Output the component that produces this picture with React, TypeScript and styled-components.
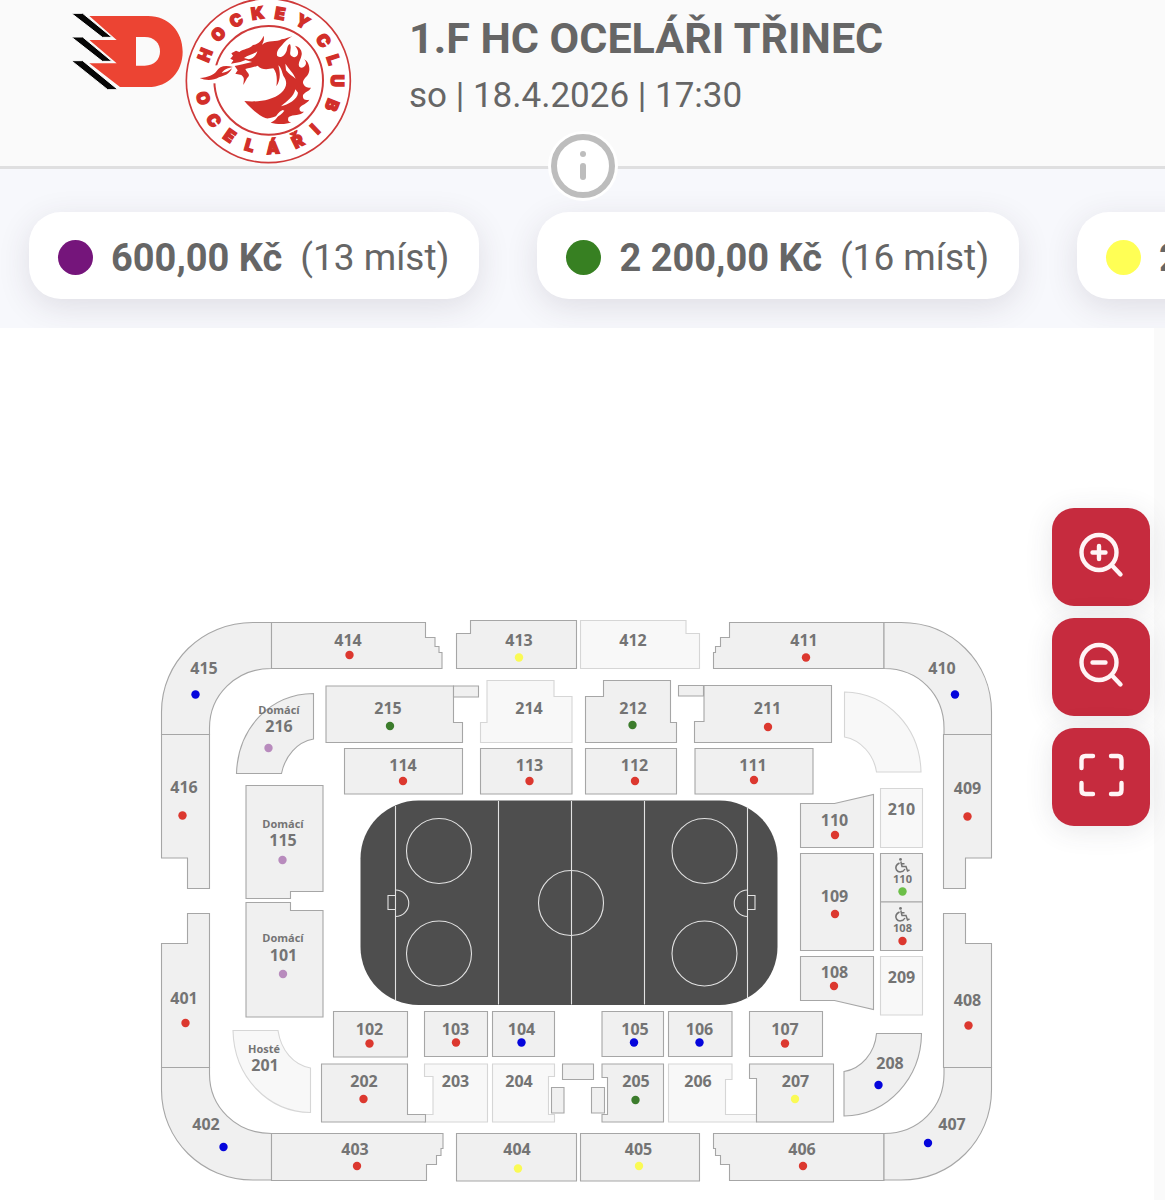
import React from "react";
import styled, { createGlobalStyle } from "styled-components";

const GlobalStyle = createGlobalStyle`
  * { box-sizing: border-box; }
  body {
    margin: 0;
    background: #ffffff;
    color: #666666;
    font-family: Roboto, "Liberation Sans", sans-serif;
    overflow-x: hidden;
  }
`;

const Page = styled.div`
  display: flex;
  flex-direction: column;
  min-height: 100vh;
`;

const Header = styled.header`
  position: relative;
  display: flex;
  height: 169px;
  padding-left: 72px;
  background: #fafafa;
  border-bottom: 3px solid #dfdfe0;
`;

const Logos = styled.div`
  flex: none;
  width: 337px;
`;

const Heading = styled.div`
  display: flex;
  flex-direction: column;
  gap: 8px;
  padding-top: 12px;
`;

const Title = styled.h1`
  margin: 0;
  font-size: 43px;
  line-height: 52px;
  font-weight: 700;
  white-space: nowrap;
`;

const DateLine = styled.p`
  margin: 0;
  font-size: 35px;
  line-height: 48px;
  white-space: nowrap;
`;

const InfoButton = styled.button`
  position: absolute;
  left: 50%;
  bottom: -35px;
  z-index: 1;
  display: grid;
  place-items: center;
  width: 70px;
  height: 70px;
  margin-left: -35px;
  padding: 0;
  border: 0;
  border-radius: 50%;
  background: #ffffff;
`;

const PriceBar = styled.ul`
  display: flex;
  gap: 58px;
  height: 159px;
  margin: 0;
  padding: 43px 0 0 29px;
  list-style: none;
  overflow: hidden;
  background: #f7f8fc;
`;

const PriceItem = styled.li`
  flex: none;
`;

const PriceButton = styled.button`
  display: flex;
  align-items: center;
  gap: 18px;
  height: 87px;
  padding: 4px 30px 0 29px;
  border: 0;
  border-radius: 32px;
  background: #ffffff;
  box-shadow: 0 8px 32px rgba(60, 50, 70, 0.13);
  color: inherit;
  font-family: inherit;
  font-size: 37px;
  line-height: 48px;
  white-space: nowrap;
`;

const Amount = styled.strong`
  font-size: 38px;
`;

const Swatch = styled.span<{ $color: string }>`
  width: 35px;
  height: 35px;
  border-radius: 50%;
  background: ${(p) => p.$color};
`;

const Stage = styled.main`
  position: relative;
  flex: 1;
  margin-right: 11px;
  box-shadow: 11px 0 0 #fafafa;
`;

const Plan = styled.svg`
  display: block;
  width: 100%;
  height: auto;
`;

const Tools = styled.div`
  position: absolute;
  top: 180px;
  right: 4px;
  display: flex;
  flex-direction: column;
  gap: 12px;
`;

const ToolButton = styled.button`
  display: grid;
  place-items: center;
  width: 98px;
  height: 98px;
  padding: 0;
  border: 0;
  border-radius: 22px;
  background: #c62b3e;
  box-shadow: 0 4px 28px rgba(60, 60, 70, 0.12);
`;

const Area = styled.path<{ $off?: boolean }>`
  fill: ${(p) => (p.$off ? "#f8f8f8" : "#f0f0f0")};
  stroke: ${(p) => (p.$off ? "#d6d6d6" : "#a6a6a6")};
  stroke-width: 1.1;
`;

const Label = styled.text<{ $small?: boolean }>`
  fill: #747474;
  font-family: "Open Sans", "Noto Sans", sans-serif;
  font-size: ${(p) => (p.$small ? 11 : 16)}px;
  font-weight: 700;
  text-anchor: middle;
`;

const CrestLetter = styled.text`
  fill: #d22f2a;
  stroke: #d22f2a;
  stroke-width: 4;
  font-family: Inter, "Open Sans", sans-serif;
  font-size: 50px;
  font-weight: 900;
  text-anchor: middle;
`;

const RED = "#dc382f";
const BLUE = "#0505dc";
const GREEN = "#3c7c2c";
const YELLOW = "#fafa55";
const LILAC = "#b88bbd";
const LIME = "#6cbf48";

type Section = {
  id: string;
  d: string;
  x?: number;
  y?: number;
  dot?: [number, number, string];
  off?: boolean;
  note?: [string, number, number];
  chair?: boolean;
};

const rect = (x1: number, y1: number, x2: number, y2: number) =>
  `M${x1} ${y1}H${x2}V${y2}H${x1}Z`;

const sections: Section[] = [
  { id: "415", x: 204, y: 674, dot: [195.5, 694.5, BLUE], d: "M161.5 734.5V712C161.5 662 202 622.5 253 622.5H271.5V668.5C236 668.5 209.5 695 209.5 728V734.5Z" },
  { id: "414", x: 348, y: 646, dot: [349.5, 655, RED], d: "M271.5 622.5H425.5V637.5H435V646.5H439V652.5H442V668.5H271.5Z" },
  { id: "416", x: 184, y: 793, dot: [182.5, 815.5, RED], d: "M161.5 734.5H209.5V888.5H187.5V858H161.5Z" },
  { id: "413", x: 519, y: 646, dot: [519, 657.5, YELLOW], d: "M456.5 668.5V633.5H470.5V620.5H576.5V668.5Z" },
  { id: "412", x: 633, y: 646, off: true, d: "M580.5 668.5V620.5H686V633.5H699.5V668.5Z" },
  { id: "411", x: 804, y: 646, dot: [806, 657.5, RED], d: "M713.5 668.5V652.5H715.5V646.5H720.5V637.5H729.5V622.5H884V668.5Z" },
  { id: "410", x: 942, y: 674, dot: [955, 694.5, BLUE], d: "M884 622.5H901C952 622.5 991.5 662 991.5 712V734.5H944V728C944 695 919 668.5 884 668.5Z" },
  { id: "409", x: 967.5, y: 794, dot: [967.5, 816.5, RED], d: "M943.5 734.5H991.5V858H965.5V888.5H943.5Z" },
  { id: "401", x: 184, y: 1004, dot: [185.5, 1023, RED], d: "M187.5 913.5H209.5V1067.5H161.5V943.5H187.5Z" },
  { id: "402", x: 206, y: 1130, dot: [223.5, 1147, BLUE], d: "M161.5 1067.5V1090C161.5 1140 202 1180 253 1180H271.5V1133.5C236 1133.5 209.5 1107 209.5 1074V1067.5Z" },
  { id: "403", x: 355, y: 1155, dot: [357, 1166, RED], d: "M271.5 1133.5H443V1148.5H441V1155.5H436.5V1164.5H426.5V1180.5H271.5Z" },
  { id: "404", x: 517, y: 1155, dot: [518, 1168.5, YELLOW], d: rect(456.5, 1133.5, 576.5, 1181) },
  { id: "405", x: 638.5, y: 1155, dot: [639, 1166, YELLOW], d: rect(580.5, 1133.5, 699.5, 1181) },
  { id: "406", x: 802, y: 1155, dot: [803, 1166, RED], d: "M713.5 1133.5H884V1180.5H729.5V1164.5H720.5V1155.5H715.5V1148.5H713.5Z" },
  { id: "407", x: 952, y: 1130, dot: [928, 1143, BLUE], d: "M991.5 1067.5V1090C991.5 1140 952 1180 901 1180H884V1133.5C919 1133.5 944 1107 944 1074V1067.5Z" },
  { id: "408", x: 967.5, y: 1006, dot: [968.5, 1025.5, RED], d: "M943.5 913.5H965.5V943.5H991.5V1067.5H943.5Z" },
  { id: "215", x: 388, y: 714, dot: [390, 726, GREEN], d: "M326 686H453.5V722.5H462.5V742.5H326Z" },
  { id: "214", x: 529, y: 714, off: true, d: "M487 680.5H554V696.5H572V742.5H480.5V722.5H487Z" },
  { id: "212", x: 633, y: 714, dot: [632.5, 725, GREEN], d: "M603.5 680.5H670.5V722.5H676.5V742.5H585.5V696.5H603.5Z" },
  { id: "211", x: 767.5, y: 714, dot: [768, 727, RED], d: "M704 685.5H831.5V742.5H694.5V721.5H704Z" },
  { id: "114", x: 403, y: 771, dot: [403, 781, RED], d: rect(344.5, 748.5, 462.5, 794) },
  { id: "113", x: 529.5, y: 771, dot: [529.5, 781, RED], d: rect(480.5, 748.5, 572, 794) },
  { id: "112", x: 634.5, y: 771, dot: [635, 781, RED], d: rect(585.5, 748.5, 676.5, 794) },
  { id: "111", x: 753, y: 771, dot: [754, 780, RED], d: rect(695, 748.5, 813, 794) },
  { id: "216", x: 279, y: 732, dot: [268.5, 748, LILAC], note: ["Domácí", 279, 714], d: "M236.5 773.5C238 728 270 694 313.5 693.5V739C297 742 285 756 281.5 773.5Z" },
  { id: "213", off: true, d: "M844.5 692C888 693 920 728 921 772H876.5C874 755 861 740 844.5 737Z" },
  { id: "115", x: 283, y: 846, dot: [282.5, 860, LILAC], note: ["Domácí", 283, 828], d: "M246 785.5H323V891.5H290.5V898.5H246Z" },
  { id: "101", x: 283.5, y: 961, dot: [283, 974, LILAC], note: ["Domácí", 283, 942], d: "M246 902.5H290.5V910.5H323V1017H246Z" },
  { id: "201", x: 265, y: 1071, off: true, note: ["Hosté", 264, 1053], d: "M233 1030.5H278C281 1050 293 1065 310.5 1068V1112.5C268 1112 234 1077 233 1030.5Z" },
  { id: "208", x: 890, y: 1069, dot: [878.5, 1085, BLUE], d: "M876.5 1033.5H921.5C921 1078 888 1115 844 1116V1071.5C861 1069 875 1053 876.5 1033.5Z" },
  { id: "110", x: 834.5, y: 826, dot: [835, 835, RED], d: "M800.5 803.5H834.5L873.5 794.5V847.5H800.5Z" },
  { id: "109", x: 834.5, y: 902, dot: [835, 914, RED], d: rect(800.5, 853.5, 873.5, 950.5) },
  { id: "108", x: 834.5, y: 978, dot: [834, 986, RED], d: "M800.5 956.5H873.5V1009.5L834.5 1000.5H800.5Z" },
  { id: "210", x: 901.5, y: 815, off: true, d: rect(880.5, 788.5, 922.5, 847.5) },
  { id: "209", x: 901.5, y: 983, off: true, d: rect(880.5, 956.5, 922.5, 1015) },
  { id: "110", x: 902.5, y: 883, chair: true, dot: [902.5, 891.5, LIME], d: rect(880.5, 853.5, 922.5, 902) },
  { id: "108", x: 902.5, y: 932, chair: true, dot: [902.5, 941, RED], d: rect(880.5, 902, 922.5, 950.5) },
  { id: "102", x: 369.5, y: 1035, dot: [369.5, 1043.5, RED], d: rect(333.5, 1011.5, 407.5, 1057) },
  { id: "103", x: 455.5, y: 1035, dot: [456, 1042.5, RED], d: rect(424.5, 1011.5, 487.5, 1056.5) },
  { id: "104", x: 521.5, y: 1035, dot: [521.5, 1042.5, BLUE], d: rect(492.5, 1011.5, 554.5, 1056.5) },
  { id: "105", x: 635, y: 1035, dot: [634, 1042.5, BLUE], d: rect(602, 1011.5, 663.5, 1056.5) },
  { id: "106", x: 699.5, y: 1035, dot: [699.5, 1042.5, BLUE], d: rect(668.5, 1011.5, 732, 1056.5) },
  { id: "107", x: 785, y: 1035, dot: [785, 1043.5, RED], d: rect(749.5, 1011.5, 822.5, 1056.5) },
  { id: "203", x: 455.5, y: 1087, off: true, d: "M424.5 1064H487.5V1122H424.5V1114.5H433V1076.5H424.5Z" },
  { id: "202", x: 364, y: 1087, dot: [363.5, 1099, RED], d: "M321.5 1064H407.5V1114.5H425.5V1122H321.5Z" },
  { id: "204", x: 519, y: 1087, off: true, d: "M492.5 1064H554.5V1076.5H548.5V1114.5H554.5V1122H492.5Z" },
  { id: "205", x: 636, y: 1087, dot: [635.5, 1100, GREEN], d: "M602 1064H663.5V1122H602V1114.5H607.5V1077.5H602Z" },
  { id: "206", x: 698, y: 1087, off: true, d: "M668.5 1064H732V1079.5H725.5V1114.5H756.5V1122H668.5Z" },
  { id: "207", x: 795.5, y: 1087, dot: [795, 1099, YELLOW], d: "M749.5 1064H833.5V1122H756.5V1078.5H749.5Z" },
];

const benches = [
  rect(453.5, 686, 478.5, 697),
  rect(678.5, 685.5, 703.5, 696),
  rect(562.5, 1064, 593.5, 1079.5),
  rect(551.5, 1087.5, 564, 1113),
  rect(591.5, 1087.5, 604.5, 1113),
];

const prices = [
  { color: "#75157b", price: "600,00 Kč", seats: "(13 míst)" },
  { color: "#378022", price: "2 200,00 Kč", seats: "(16 míst)" },
  { color: "#ffff55", price: "2 000,00 Kč", seats: "(24 míst)" },
];

const topLetters: [string, number][] = [
  ["H", -68], ["O", -47], ["C", -28], ["K", -9], ["E", 10], ["Y", 30],
  ["C", 54], ["L", 72], ["U", 90], ["B", 111],
];
const bottomLetters: [string, number][] = [
  ["O", 75], ["C", 54], ["E", 35], ["L", 16], ["Á", -4], ["Ř", -26], ["I", -44],
];

function TeamLogos() {
  return (
    <svg width="282" height="166" viewBox="36 0 846 498" role="img" aria-label="HC Dynamo Pardubice, HC Oceláři Třinec">
      <path fill="#ec4433" d="M88 48H264C326 48 368 94 368 155C368 216 326 261 264 261H180L88 190H170L88 120H170Z" />
      <path fill="#fafafa" d="M228 111H254C283 111 300 130 300 154C300 179 283 197 254 197H228Z" />
      <path fill="#060606" stroke="#fafafa" strokeWidth="3" d="M34 40H68L156 112H127ZM34 111H68L156 184H127ZM34 182H68L174 269H143Z" />
      <circle cx="625" cy="242" r="246" fill="#ffffff" stroke="#cf3a3a" strokeWidth="5" />
      <circle cx="626" cy="241" r="163" fill="none" stroke="#cf3a3a" strokeWidth="6" />
      <path fill="#ffffff" d="M448 196H480V250H448Z" />
      {topLetters.map(([c, a], i) => (
        <CrestLetter key={i} transform={`rotate(${a} 625 242)`} x="625" y="55">{c}</CrestLetter>
      ))}
      {bottomLetters.map(([c, a], i) => (
        <CrestLetter key={i} transform={`rotate(${a} 625 242)`} x="625" y="462">{c}</CrestLetter>
      ))}
      <g fill="#d22f2a">
        <path d="M419 234C444 232 461 225 470 213C478 198 496 194 519 201C501 204 491 210 485 219C499 217 508 212 516 205C509 222 492 228 477 232C460 242 436 242 419 234Z" />
        <path d="M513 191L520 181L511 176L519 167L514 160L528 152L538 156C552 145 566 149 579 135C593 133 604 124 611 107C613 118 611 126 606 134C626 119 649 127 665 118C678 116 688 112 697 109C678 119 670 132 658 144C651 152 649 162 652 168C663 176 675 166 680 152C683 141 682 136 690 132C696 145 687 157 692 166C699 174 709 173 713 164C717 153 711 145 705 137C718 140 727 151 725 164C723 178 712 190 718 200C726 208 737 200 738 190C738 184 735 180 731 177C744 182 751 200 747 216C743 231 728 236 729 249C733 262 745 264 753 263C748 275 732 276 729 286C727 298 736 302 748 299C741 312 725 313 719 323C716 333 725 337 732 335C722 348 699 342 686 351C681 362 687 367 694 366C680 374 652 374 632 368C643 363 650 358 655 346C645 351 631 356 618 355C595 346 573 326 553 303C590 307 637 302 663 279C680 264 684 246 670 227C665 215 665 204 655 196C662 221 661 241 649 259C652 239 651 218 640 205C622 208 606 211 593 197C580 202 568 204 556 207C562 221 574 222 561 235L550 255C550 240 556 235 544 225L526 221L533 211L524 198L548 193L576 186L557 180L541 186Z" />
      </g>
      <g fill="#ffffff">
        <path d="M676 191C688 209 699 217 707 236C698 229 686 222 678 211Z" />
        <path d="M706 268C702 290 681 303 663 319C684 313 713 299 714 278Z" />
        <path d="M552 174C564 165 580 164 592 154C588 168 579 176 566 178Z" />
        <path d="M668 330C656 336 650 344 646 353C656 348 666 342 673 332Z" />
      </g>
    </svg>
  );
}

function Rink() {
  return (
    <g>
      <rect x="360.5" y="800.5" width="417" height="204.5" rx="58" fill="#4e4e4e" />
      <g fill="none" stroke="#e2e2e2" strokeWidth="1.1">
        <path d="M395.5 806V1000M498.5 801V1004.5M571.5 801V1004.5M644.5 801V1004.5M747.5 807V999" />
        <circle cx="439" cy="851" r="32.5" />
        <circle cx="439" cy="953.5" r="32.5" />
        <circle cx="704.5" cy="851" r="32.5" />
        <circle cx="704.5" cy="953.5" r="32.5" />
        <circle cx="571" cy="903" r="32.5" />
        <path d="M395.5 890A13 13 0 0 1 395.5 916.5M747.5 890A13 13 0 0 0 747.5 916.5" />
        <path d="M395.5 895.5H388V909.5H395.5M747.5 895.5H755V909.5H747.5" />
      </g>
    </g>
  );
}

function Wheelchair({ y }: { y: number }) {
  return (
    <g transform={`translate(895 ${y})`} fill="none" stroke="#747474" strokeWidth="1.5">
      <circle cx="5.5" cy="1.4" r="1.4" fill="#747474" stroke="none" />
      <path d="M5.8 3.5L7 8.5H11L12.5 13L14.5 12M6 5.8H9.5" />
      <path d="M4.5 5C1.5 6.5 0 9 1.5 12C3.5 14.8 8 14.5 10 11" />
    </g>
  );
}

function SeatPlan() {
  return (
    <Plan viewBox="0 328 1154 872" role="img" aria-label="Plán arény">
      {sections.map((s, i) => (
        <g key={i}>
          <Area d={s.d} $off={s.off} />
          {s.note && <Label $small x={s.note[1]} y={s.note[2]}>{s.note[0]}</Label>}
          {s.chair && <Wheelchair y={s.y! - 25} />}
          {s.x && <Label $small={s.chair} x={s.x} y={s.y}>{s.id}</Label>}
          {s.dot && <circle cx={s.dot[0]} cy={s.dot[1]} r="4.2" fill={s.dot[2]} />}
        </g>
      ))}
      {benches.map((d) => <Area key={d} d={d} />)}
      <Rink />
    </Plan>
  );
}

function ToolIcon({ children }: { children: React.ReactNode }) {
  return (
    <svg width="52" height="52" viewBox="0 0 52 52" fill="none" stroke="#fff4f5" strokeWidth="4.4" strokeLinecap="round" strokeLinejoin="round">
      {children}
    </svg>
  );
}

export default function App() {
  return (
    <Page>
      <GlobalStyle />
      <Header>
        <Logos><TeamLogos /></Logos>
        <Heading>
          <Title>1.F HC OCELÁŘI TŘINEC</Title>
          <DateLine>so | 18.4.2026 | 17:30</DateLine>
        </Heading>
        <InfoButton aria-label="Informace">
          <svg width="64" height="64" viewBox="0 0 64 64">
            <circle cx="32" cy="32" r="29" fill="#ffffff" stroke="#bdbdbd" strokeWidth="6" />
            <circle cx="32" cy="20" r="3" fill="#bdbdbd" />
            <path d="M32 32V43" stroke="#bdbdbd" strokeWidth="6" strokeLinecap="round" />
          </svg>
        </InfoButton>
      </Header>
      <PriceBar>
        {prices.map((p) => (
          <PriceItem key={p.price}>
            <PriceButton>
              <Swatch $color={p.color} />
              <Amount>{p.price}</Amount>
              <span>{p.seats}</span>
            </PriceButton>
          </PriceItem>
        ))}
      </PriceBar>
      <Stage>
        <SeatPlan />
        <Tools>
          <ToolButton aria-label="Přiblížit">
            <ToolIcon>
              <circle cx="24" cy="21.5" r="17.5" />
              <path d="M37 34.5L45.500 43.500M24 15V28M17.500 21.500H30.500" />
            </ToolIcon>
          </ToolButton>
          <ToolButton aria-label="Oddálit">
            <ToolIcon>
              <circle cx="24" cy="21.5" r="17.5" />
              <path d="M37 34.5L45.500 43.500M17.500 21.500H30.500" />
            </ToolIcon>
          </ToolButton>
          <ToolButton aria-label="Celá obrazovka">
            <ToolIcon>
              <path d="M6.500 17V9Q6.500 5 10.500 5H18M36 5H43Q46.500 5 46.500 9V17M46.500 32V39Q46.500 43 43 43H36M18 43H10.500Q6.500 43 6.500 39V32" />
            </ToolIcon>
          </ToolButton>
        </Tools>
      </Stage>
    </Page>
  );
}
